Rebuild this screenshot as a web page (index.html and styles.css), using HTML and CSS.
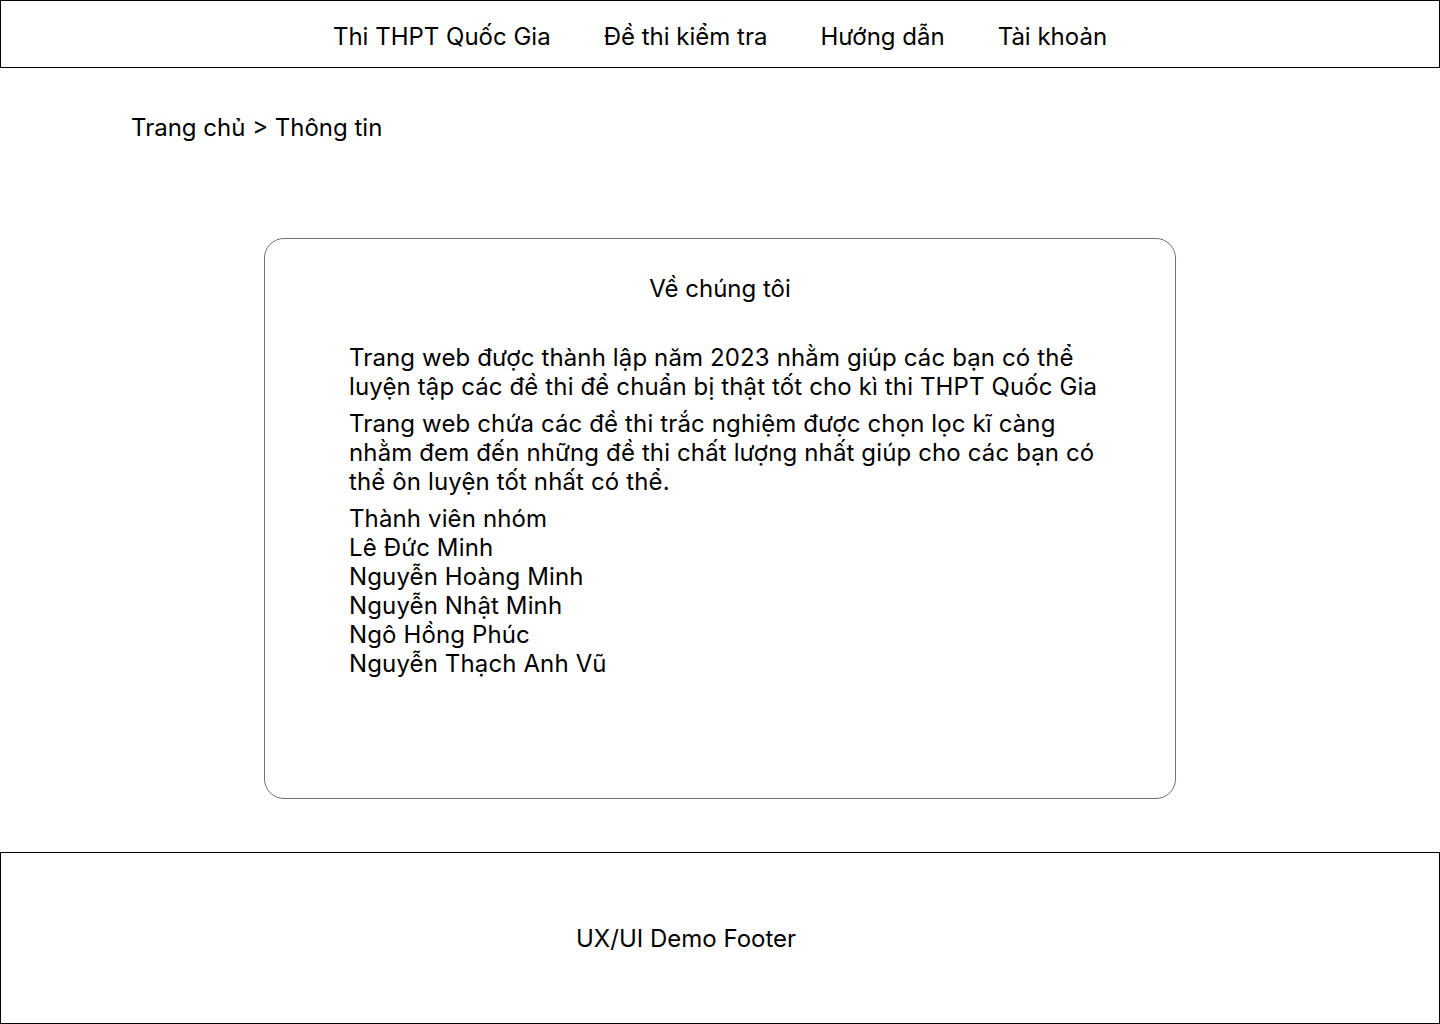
FILE: index.html
```html
<!DOCTYPE html>
<html lang="vi">
<head>
<meta charset="utf-8">
<title>Về chúng tôi</title>
<link rel="stylesheet" href="styles.css">
</head>
<body>
<header class="header">
  <nav class="nav">
    <a class="nav-item" href="#">Thi THPT Quốc Gia</a>
    <a class="nav-item" href="#">Đề thi kiểm tra</a>
    <a class="nav-item" href="#">Hướng dẫn</a>
    <a class="nav-item" href="#">Tài khoản</a>
  </nav>
</header>
<div class="breadcrumb">Trang chủ &gt; Thông tin</div>
<main class="card">
  <h1 class="card-title">Về chúng tôi</h1>
  <div class="card-body">
    <p class="para">Trang web được thành lập năm 2023 nhằm giúp các bạn có thể<br>luyện tập các đề thi để chuẩn bị thật tốt cho kì thi THPT Quốc Gia</p>
    <p class="para">Trang web chứa các đề thi trắc nghiệm được chọn lọc kĩ càng<br>nhằm đem đến những đề thi chất lượng nhất giúp cho các bạn có<br>thể ôn luyện tốt nhất có thể.</p>
    <p class="para">Thành viên nhóm<br>Lê Đức Minh<br>Nguyễn Hoàng Minh<br>Nguyễn Nhật Minh<br>Ngô Hồng Phúc<br>Nguyễn Thạch Anh Vũ</p>
  </div>
</main>
<footer class="footer">
  <span class="footer-text">UX/UI Demo Footer</span>
</footer>
</body>
</html>
```
FILE: styles.css
```css
* { box-sizing: border-box; }
html, body { margin: 0; padding: 0; background: #fff; }
body {
  font-family: Inter, "Noto Sans", sans-serif;
  color: #000;
  font-size: 24px;
  line-height: 29px;
}
.header {
  height: 68px;
  border: 1px solid #000;
  display: flex;
  align-items: center;
  justify-content: center;
}
.nav {
  display: flex;
  gap: 53px;
  padding-top: 4px;
}
.nav-item {
  color: #000;
  text-decoration: none;
  font-size: 24px;
}
.breadcrumb {
  padding: 45px 0 0 131px;
  height: 170px;
}
.card {
  width: 912px;
  height: 561px;
  margin: 0 auto;
  border: 1px solid #776e6e;
  border-radius: 20px;
  padding: 35px 0 0 84px;
}
.card-title {
  margin: 0 0 40px -84px;
  font-size: 24px;
  font-weight: 400;
  line-height: 29px;
  text-align: center;
}
.card-body {
  letter-spacing: 0.13px;
}
.para {
  margin: 0 0 8px;
}
.footer {
  margin-top: 53px;
  height: 172px;
  border: 1px solid #000;
  display: flex;
  align-items: center;
  padding: 0 0 0 575px;
}
```
